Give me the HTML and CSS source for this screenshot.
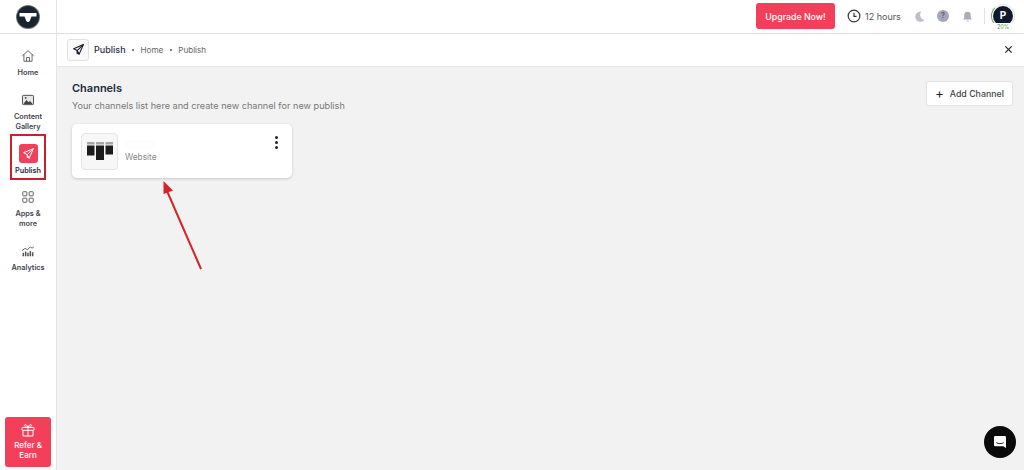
FILE: index.html
```html
<!DOCTYPE html>
<html lang="en">
<head>
<meta charset="utf-8">
<title>Publish</title>
<link rel="stylesheet" href="styles.css">
</head>
<body>
<div class="app">
  <aside class="sidebar">
    <div class="logo-bar">
      <svg class="logo" viewBox="0 0 24 24"><circle cx="12" cy="12" r="12" fill="#6f747c"/><circle cx="12" cy="12" r="11" fill="#1b2230"/><path d="M3.500 8h17v3.500h-5l-1.800 4.500a2 2 0 0 1-3.400 0L8.500 11.500h-5z" fill="#fff"/></svg>
    </div>
    <nav class="nav">
      <a class="nav-item home">
        <svg class="nav-icon" viewBox="0 0 24 24" fill="none" stroke="#555" stroke-width="1.500" stroke-linejoin="round"><path d="M2.500 11.500 12 3l9.500 8.500M5 9.500V21h14V9.500"/><path d="M9.500 21v-6.500h5V21"/></svg>
        <span>Home</span>
      </a>
      <a class="nav-item gallery">
        <svg class="nav-icon" viewBox="0 0 24 24"><rect x="2.500" y="4" width="19" height="16" rx="1.500" fill="#e6e6e6" stroke="#444" stroke-width="1.600"/><path d="M4 19l5.500-7 3.500 4 2.500-2.500L20 19z" fill="#444"/><circle cx="8" cy="8.500" r="1.500" fill="#444"/></svg>
        <span>Content Gallery</span>
      </a>
      <a class="nav-item publish">
        <span class="publish-icon">
          <svg viewBox="0 0 24 24" fill="none" stroke="#fff" stroke-width="1.800" stroke-linejoin="round"><path d="M21 3 3 10.500l6.500 3.500L13 21z"/><path d="M21 3 9.500 14v5.500l3-2.500" /></svg>
        </span>
        <span>Publish</span>
      </a>
      <a class="nav-item apps">
        <svg class="nav-icon" viewBox="0 0 24 24" fill="none" stroke="#555" stroke-width="1.600"><rect x="3" y="3" width="7" height="7" rx="1"/><rect x="14" y="3" width="7" height="7" rx="1"/><rect x="3" y="14" width="7" height="7" rx="1"/><rect x="14" y="14" width="7" height="7" rx="1"/></svg>
        <span>Apps &amp; more</span>
      </a>
      <a class="nav-item analytics">
        <svg class="nav-icon" viewBox="0 0 24 24" fill="none" stroke="#555" stroke-width="1.500"><path d="M2 11l5-3.500 4 2.500 5-5 3 2 3-2"/><path d="M4 21v-6M8 21v-8M12 21v-6M16 21v-9M20 21v-7" stroke-width="2.600"/></svg>
        <span>Analytics</span>
      </a>
    </nav>
    <a class="refer">
      <svg viewBox="0 0 24 24" fill="none" stroke="#fff" stroke-width="1.500" stroke-linejoin="round"><rect x="3" y="8" width="18" height="4.500" rx="1"/><path d="M4.500 12.500V21h15v-8.500M12 8v13M12 8C9 8 7 6.800 7 5s2.500-2.500 5 3c2.500-5.500 5-4.800 5-3s-2 3-5 3z"/></svg>
      <span>Refer &amp; Earn</span>
    </a>
  </aside>

  <div class="content">
    <header class="topbar">
      <button class="upgrade">Upgrade Now!</button>
      <span class="timer">
        <svg viewBox="0 0 24 24" fill="none" stroke="#333" stroke-width="2"><circle cx="12" cy="12" r="10"/><path d="M12 6.500V12.500h4.500"/></svg>
        12 hours
      </span>
      <svg class="tool moon" viewBox="0 0 24 24"><path d="M15 3a9.500 9.500 0 1 0 6 15.500A10 10 0 0 1 15 3z" fill="#bcc0c8"/></svg>
      <span class="help">?</span>
      <svg class="tool bell" viewBox="0 0 24 24"><path d="M12 3a6 6 0 0 0-6 6v5l-2 3.500h16L18 14V9a6 6 0 0 0-6-6z" fill="#a9adb8"/><path d="M10 19.500h4V21h-4z" fill="#a9adb8"/></svg>
      <span class="divider"></span>
      <span class="avatar">
        <span class="ring"></span>
        <span class="avatar-disc">P</span>
        <span class="percent">20%</span>
      </span>
    </header>

    <div class="crumbbar">
      <span class="crumb-icon">
        <svg viewBox="0 0 24 24" fill="none" stroke="#1b2230" stroke-width="2.200" stroke-linejoin="round"><path d="M21 3 3 10.500l6.500 3.500L13 21z"/><path d="M21 3 9.500 14v5.500l3-2.500"/></svg>
      </span>
      <strong>Publish</strong>
      <i class="dot"></i>
      <span>Home</span>
      <i class="dot"></i>
      <span>Publish</span>
      <svg class="close" viewBox="0 0 10 10" stroke="#222" stroke-width="1.300"><path d="M1.500 1.500l7 7M8.500 1.500l-7 7"/></svg>
    </div>

    <main class="main">
      <div class="head">
        <div>
          <h1>Channels</h1>
          <p>Your channels list here and create new channel for new publish</p>
        </div>
        <button class="add"><b>+</b> Add Channel</button>
      </div>
      <section class="card">
        <span class="thumb">
          <svg viewBox="0 0 26 18"><path d="M0 0h7.500v2.500H0zM9 0h8v2.500H9zM18.500 0H26v2.500h-7.500z" fill="#a5a5a5"/><path d="M0 3.500h7.500v10H0zM9 3.500h8V18H9zM18.500 3.500H26v9h-7.500z" fill="#1c1c1c"/></svg>
        </span>
        <span class="card-text">
          <span class="card-name"></span>
          <span class="card-type">Website</span>
        </span>
        <span class="kebab"><i></i><i></i><i></i></span>
      </section>
    </main>
  </div>
</div>

<span class="highlight"></span>
<svg class="arrow" viewBox="0 0 1024 470"><path d="M201 269 167 191" stroke="#d8222a" stroke-width="2" fill="none"/><path d="M163.500 181l9.500 9.500-9.500 3.500z" fill="#d8222a"/></svg>
<span class="chat">
  <svg viewBox="0 0 24 24"><path d="M5 3h14a2 2 0 0 1 2 2v16l-4-2.500H5a2 2 0 0 1-2-2V5a2 2 0 0 1 2-2z" fill="#fff"/><path d="M6.500 13c3.500 2 7.500 2 11 0" fill="none" stroke="#111" stroke-width="1.400"/></svg>
</span>
</body>
</html>
```
FILE: styles.css
```css
* { box-sizing: border-box; }
html, body { margin: 0; height: 470px; overflow: hidden; }
body { font-family: Inter, "Liberation Sans", sans-serif; color: #1b2230; background: #fff; }
.app { display: flex; height: 470px; }

.sidebar { width: 57px; flex: none; display: flex; flex-direction: column; border-right: 1px solid #e4e4e4; background: #fff; }
.logo-bar { height: 34px; flex: none; display: flex; align-items: center; justify-content: center; border-bottom: 1px solid #dedede; padding-right: 1px; }
.logo { width: 24px; height: 24px; }
.nav { display: flex; flex-direction: column; align-items: center; padding-top: 15px; flex: 1; }
.nav-item { width: 44px; display: flex; flex-direction: column; align-items: center; gap: 5px; font-size: 7.300px; line-height: 10px; font-weight: 600; color: #3f444f; text-align: center; }
.nav-icon { width: 14px; height: 14px; flex: none; }
.gallery { margin-top: 15px; }
.gallery span { width: 36px; }
.publish { margin-top: 12px; gap: 3px; color: #2b2f3a; }
.publish-icon { width: 19px; height: 19px; border-radius: 3px; background: #f2405a; display: flex; align-items: center; justify-content: center; }
.publish-icon svg { width: 13px; height: 13px; }
.apps { margin-top: 14px; }
.apps span:last-child { width: 30px; }
.analytics { margin-top: 15px; }
.refer { width: 46px; height: 50px; margin: 0 0 3px 5px; background: #f2405a; border-radius: 3px; color: #fff; display: flex; flex-direction: column; align-items: center; font-size: 8px; line-height: 10px; font-weight: 500; text-align: center; padding-top: 5px; gap: 2px; flex: none; }
.refer svg { width: 16px; height: 16px; }
.refer span { width: 30px; }

.content { flex: 1; display: flex; flex-direction: column; min-width: 0; }
.topbar { height: 34px; flex: none; display: flex; align-items: center; border-bottom: 1px solid #dedede; padding: 0 9px 1px 0; justify-content: flex-end; background: #fff; }
.upgrade { width: 79px; height: 26px; border: 0; border-radius: 3px; background: #f2405a; color: #fff; font: 500 8.800px Inter, "Liberation Sans", sans-serif; padding: 0; }
.timer { display: flex; align-items: center; gap: 4px; font-size: 9px; color: #555; margin-left: 12px; width: 53px; white-space: nowrap; }
.timer svg { width: 14px; height: 14px; flex: none; }
.tool { width: 13px; height: 13px; flex: none; }
.moon { margin-left: 13px; }
.help { width: 12px; height: 12px; flex: none; border-radius: 50%; background: #a3a5bb; color: #5a5d78; font-size: 7px; font-weight: 700; line-height: 12px; text-align: center; margin-left: 11px; }
.bell { margin-left: 12px; }
.divider { width: 1px; height: 16px; background: #e2e2e2; margin-left: 10px; }
.avatar { position: relative; width: 24px; height: 24px; margin-left: 6px; flex: none; }
.ring { position: absolute; inset: 0; border-radius: 50%; border: 1px solid #e3e3e3; border-left: 1.500px solid #5fb35a; }
.avatar-disc { position: absolute; left: 2px; top: 2px; width: 20px; height: 20px; border-radius: 50%; background: #10192b; color: #fff; font-size: 10px; font-weight: 700; line-height: 19px; text-align: center; }
.percent { position: absolute; left: 0; right: 0; bottom: -3px; font-size: 5.500px; line-height: 8px; color: #3f9a3c; text-align: center; background: #fff; border-radius: 4px; }

.crumbbar { height: 33px; flex: none; display: flex; align-items: center; padding: 0 11px 1px 10px; font-size: 8.100px; color: #666; border-bottom: 1px solid #e6e6e6; background: #fff; }
.crumb-icon { width: 22px; height: 22px; border: 1px solid #e1e1e1; border-radius: 3px; background: #fafafa; display: flex; align-items: center; justify-content: center; margin-right: 5px; }
.crumb-icon svg { width: 13px; height: 13px; }
.crumbbar strong { font-size: 9px; font-weight: 500; color: #2a3040; }
.dot { width: 2px; height: 2px; border-radius: 50%; background: #555; margin: 0 6.500px; }
.close { width: 9px; height: 9px; margin-left: auto; }

.main { flex: 1; background: #f2f2f2; padding: 14px 11px 0 15px; }
.head { display: flex; justify-content: space-between; align-items: flex-start; }
h1 { margin: 0; font-size: 11px; line-height: 15px; font-weight: 600; color: #232a3c; }
.head p { margin: 3px 0 0; font-size: 9.100px; line-height: 13px; color: #777; letter-spacing: .02px; }
.add { width: 87px; height: 25px; background: #fff; border: 1px solid #e3e3e3; border-radius: 3px; font: 500 8.800px Inter, "Liberation Sans", sans-serif; color: #444; padding: 0 0 1px; display: flex; align-items: center; justify-content: center; gap: 6px; }
.add b { font-size: 13px; line-height: 13px; font-weight: 400; color: #222; }

.card { width: 220px; height: 54px; margin-top: 12px; background: #fff; border-radius: 5px; box-shadow: 0 1px 3px rgba(0,0,0,.18); display: flex; align-items: center; padding: 0 9px; position: relative; }
.thumb { width: 37px; height: 37px; border: 1px solid #e5e5e5; border-radius: 4px; background: #f7f7f7; display: flex; align-items: center; justify-content: center; margin-right: 7px; flex: none; }
.thumb svg { width: 26px; height: 18px; }
.card-text { display: flex; flex-direction: column; gap: 3px; }
.card-name { width: 30px; height: 9px; background: #fdfdfd; }
.card-type { font-size: 8.300px; line-height: 11px; color: #8a8a8a; }
.kebab { margin-left: auto; display: flex; flex-direction: column; gap: 2px; align-self: flex-start; margin-top: 12px; margin-right: 5px; }
.kebab i { width: 3px; height: 3px; border-radius: 50%; background: #222; }

.highlight { position: absolute; left: 10px; top: 134px; width: 36px; height: 46px; border: 2px solid #c8202c; }
.arrow { position: absolute; left: 0; top: 0; width: 1024px; height: 470px; pointer-events: none; }
.chat { position: absolute; left: 984px; top: 426px; width: 32px; height: 32px; border-radius: 50%; background: #0b0b0b; display: flex; align-items: center; justify-content: center; }
.chat svg { width: 16px; height: 16px; }
```
